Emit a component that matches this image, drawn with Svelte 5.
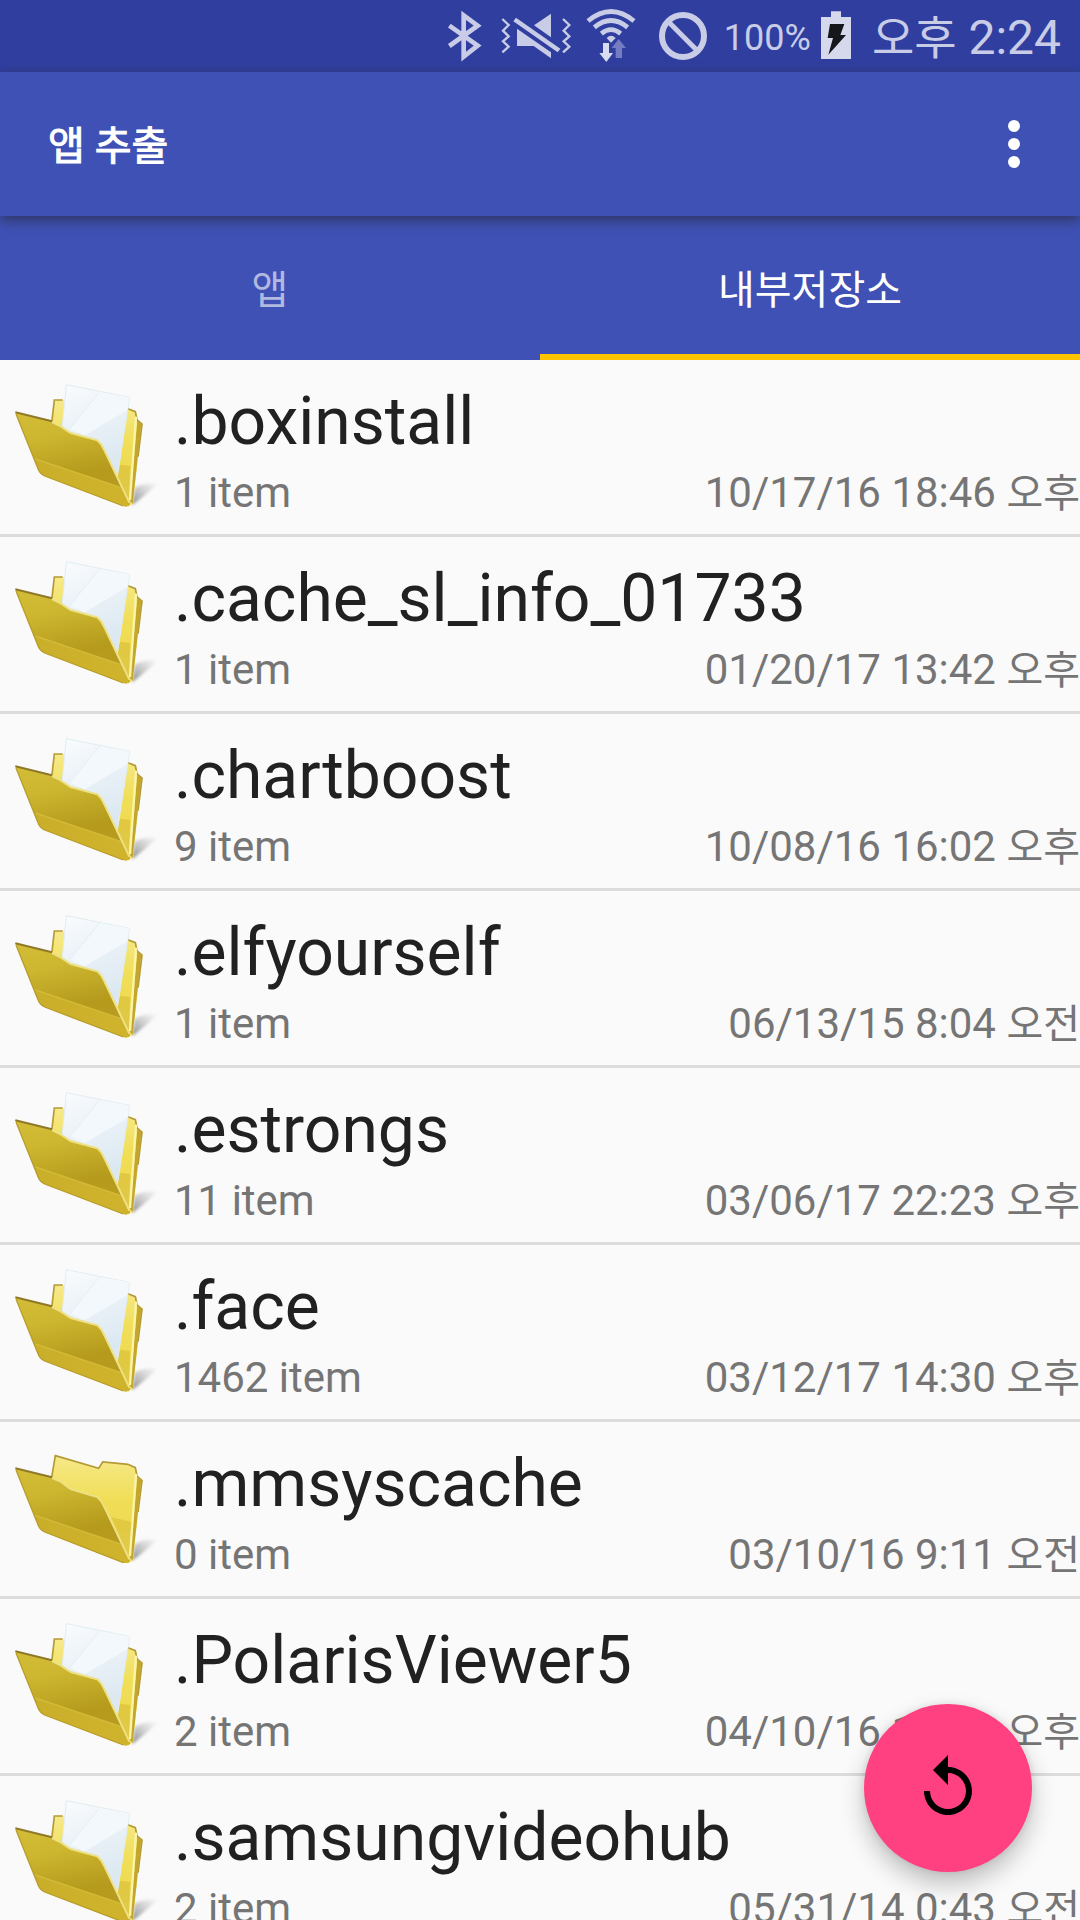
<script>
  const folders = [
    { name: '.boxinstall', count: 1, date: '10/17/16 18:46', half: '오후' },
    { name: '.cache_sl_info_01733', count: 1, date: '01/20/17 13:42', half: '오후' },
    { name: '.chartboost', count: 9, date: '10/08/16 16:02', half: '오후' },
    { name: '.elfyourself', count: 1, date: '06/13/15 8:04', half: '오전' },
    { name: '.estrongs', count: 11, date: '03/06/17 22:23', half: '오후' },
    { name: '.face', count: 1462, date: '03/12/17 14:30', half: '오후' },
    { name: '.mmsyscache', count: 0, date: '03/10/16 9:11', half: '오전' },
    { name: '.PolarisViewer5', count: 2, date: '04/10/16 18:20', half: '오후' },
    { name: '.samsungvideohub', count: 2, date: '05/31/14 0:43', half: '오전' }
  ];
  const tabs = ['앱', '내부저장소'];
  let active = $state(1);
</script>

<svg class="defs" aria-hidden="true">
  <defs>
    <linearGradient id="front" x1="0" y1="0" x2="0.25" y2="1">
      <stop offset="0" stop-color="#d3bd38" />
      <stop offset="0.3" stop-color="#cdb730" />
      <stop offset="0.75" stop-color="#b59a1c" />
      <stop offset="1" stop-color="#b79c20" />
    </linearGradient>
    <linearGradient id="rim" x1="0" y1="0" x2="1" y2="0.4">
      <stop offset="0" stop-color="#c9ae2a" />
      <stop offset="1" stop-color="#d0b32c" />
    </linearGradient>
    <linearGradient id="back" x1="0" y1="0" x2="0" y2="1">
      <stop offset="0" stop-color="#f6e98a" />
      <stop offset="0.4" stop-color="#f1de58" />
      <stop offset="0.65" stop-color="#efdb52" />
      <stop offset="1" stop-color="#f3e57c" />
    </linearGradient>
    <linearGradient id="paper" x1="0" y1="0" x2="0.3" y2="1">
      <stop offset="0" stop-color="#fafcfe" />
      <stop offset="0.5" stop-color="#eaf1f7" />
      <stop offset="1" stop-color="#dbe8f1" />
    </linearGradient>
    <linearGradient id="shade" x1="0" y1="1" x2="1" y2="0">
      <stop offset="0" stop-color="#777" stop-opacity="0.9" />
      <stop offset="0.9" stop-color="#bbb" stop-opacity="0.2" />
    </linearGradient>
    <filter id="soft" x="-20%" y="-20%" width="140%" height="140%">
      <feGaussianBlur stdDeviation="4" />
    </filter>
  </defs>
</svg>

<div class="screen">
  <div class="status">
    <svg class="bt" viewBox="51 0 111 216" aria-label="Bluetooth">
      <path d="M58 77L143 137L101 170V46L143 77L58 138" fill="none" stroke="#c9cce6" stroke-width="14" />
    </svg>
    <svg class="mute" viewBox="198 0 234 216" aria-label="Vibrate">
      <g fill="none" stroke="#c9cce6" stroke-width="7">
        <path d="M217 57L236 75L219 92L236 109L219 124L236 140L217 157" />
        <path d="M399 57L418 75L401 92L418 109L401 124L418 140L399 157" />
      </g>
      <path d="M363 41V112L312 76ZM261 86L363 157V175L311 138H261ZM258 53L391 146L383 157L250 64Z" fill="#c9cce6" />
    </svg>
    <svg class="wifi" viewBox="468 0 168 216" aria-label="Wi-Fi">
      <g fill="none" stroke="#c9cce6" stroke-width="14">
        <path d="M474 63Q543 6 612 63" />
        <path d="M493 82Q543 41 593 82" />
        <path d="M514 101Q543 77 572 101" />
      </g>
      <path d="M530 114Q543 101 557 114L543 128Z" fill="#c9cce6" />
      <path d="M519 129H537V159H549L529 186L508 159H519Z" fill="#d9dbef" />
      <path d="M566 117L588 144H576V174H557V144H545Z" fill="#747cc2" />
    </svg>
    <svg class="block" viewBox="672 0 174 216" aria-label="Blocked">
      <g fill="none" stroke="#c9cce6">
        <circle cx="759" cy="108" r="63" stroke-width="18" />
        <path d="M716 66L802 152" stroke-width="15" />
      </g>
    </svg>
    <span class="percent">100%</span>
    <svg class="battery" viewBox="213 0 90 216" aria-label="Charging">
      <path d="M243 34H273V51H303V177H213V51H243Z" fill="#d6d8eb" />
      <path d="M240 72H283L271 105H288L235 164L249 114H233Z" fill="#16171a" />
    </svg>
    <time class="clock"><span class="half">오후</span> 2:24</time>
  </div>

  <header class="appbar">
    <h1>앱 추출</h1>
    <button class="more" aria-label="More options">
      <svg viewBox="0 0 12 48">
        <circle cx="6" cy="6" r="6" />
        <circle cx="6" cy="24" r="6" />
        <circle cx="6" cy="42" r="6" />
      </svg>
    </button>
  </header>

  <div class="tabs" role="tablist">
    {#each tabs as tab, i}
      <button role="tab" class="tab" class:active={active === i} aria-selected={active === i} onclick={() => (active = i)}>{tab}</button>
    {/each}
  </div>

  <ul class="list">
    {#each folders as f}
      <li>
        <button class="row">
          <svg class="folder" viewBox="36 0 450 522" aria-hidden="true">
            {#if f.count > 0}
              <path d="M396 436L404 384Q430 366 470 372Q446 398 396 436Z" fill="url(#shade)" filter="url(#soft)" />
              <path d="M155 190L163 120L188 120L250 150L384 146L408 156L411 180L426 190L398 432L384 440Z" fill="url(#back)" />
              <path d="M155 190L163 120L188 120M384 146L406 155L411 180L426 192L414 290" fill="none" stroke="#b59a35" stroke-width="5" />
              <path d="M362 314L390 318L388 424L348 340Z" fill="#dcc33c" opacity="0.8" />
              <path d="M412 182L424 192L398 432L390 424Z" fill="#c3a62c" />
              <path d="M408 170L390 420" stroke="#faf3a8" stroke-width="7" fill="none" />
              <path d="M199 74L389 112L352 350L186 208Z" fill="url(#paper)" stroke="#e0edf2" stroke-width="3" />
              <path d="M298 96L210 206L254 226L382 150L388 112Z" fill="#f3f8fc" />
              <path d="M298 96L210 206" stroke="#e6eff5" stroke-width="3" />
              <path d="M46 156L156 184L180 198L212 218L292 240Q304 250 312 268L390 432Q386 442 370 438L134 348Q118 340 114 326Z" fill="url(#front)" />
              <path d="M106 297L362 382L390 432Q386 442 370 438L134 348Q118 340 114 326Z" fill="url(#rim)" />
              <path d="M106 297L362 382" stroke="#d9c13e" stroke-width="4" opacity="0.7" />
              <path d="M46 157L156 184" stroke="#8f7926" stroke-width="6" />
              <path d="M156 186L182 199L212 219L292 241Q304 251 312 269L388 428" fill="none" stroke="#eee184" stroke-width="6" />
              <path d="M48 162L114 326Q118 340 134 348L370 438" fill="none" stroke="#b99d2b" stroke-width="4" />
            {:else}
              <path d="M396 416L404 368Q430 348 470 354Q446 380 396 416Z" fill="url(#shade)" filter="url(#soft)" />
              <path d="M155 170L166 100L296 138L308 120L384 126L408 138L411 162L426 174L398 416L384 424Z" fill="url(#back)" />
              <path d="M155 166L166 101L296 139L308 120L384 127L406 137L411 162L426 176L414 270" fill="none" stroke="#b59a35" stroke-width="5" />
              <path d="M334 286L396 300L388 410Z" fill="#dcc33c" opacity="0.75" />
              <path d="M412 164L424 174L398 416L390 408Z" fill="#c3a62c" />
              <path d="M408 156L390 402" stroke="#faf3a8" stroke-width="7" fill="none" />
              <path d="M46 138L156 166L180 178L212 200L292 224Q304 234 312 252L390 416Q386 426 370 422L134 330Q118 322 114 308Z" fill="url(#front)" />
              <path d="M106 280L362 366L390 416Q386 426 370 422L134 330Q118 322 114 308Z" fill="url(#rim)" />
              <path d="M106 280L362 366" stroke="#d9c13e" stroke-width="4" opacity="0.7" />
              <path d="M46 139L156 166" stroke="#8f7926" stroke-width="6" />
              <path d="M156 168L182 179L212 201L292 225Q304 235 312 253L388 412" fill="none" stroke="#eee184" stroke-width="6" />
              <path d="M48 144L114 308Q118 322 134 330L370 422" fill="none" stroke="#b99d2b" stroke-width="4" />
            {/if}
          </svg>
          <span class="text">
            <span class="name">{f.name}</span>
            <span class="meta">
              <span>{f.count} item</span>
              <span>{f.date} <span class="half">{f.half}</span></span>
            </span>
          </span>
        </button>
      </li>
    {/each}
  </ul>

  <button class="fab" aria-label="Refresh">
    <svg viewBox="0 0 24 24">
      <path d="M12 5V1L7 6l5 5V7c3.31 0 6 2.69 6 6s-2.69 6-6 6-6-2.69-6-6H4c0 4.42 3.58 8 8 8s8-3.58 8-8-3.58-8-8-8z" />
    </svg>
  </button>
</div>

<style>
  :global(body) {
    background: #fafafa;
  }
  .defs {
    position: absolute;
    width: 0;
    height: 0;
  }
  .screen {
    display: flex;
    flex-direction: column;
    height: 100vh;
    overflow: hidden;
    background: #fafafa;
    font-family: Roboto, 'Noto Sans CJK KR', sans-serif;
  }
  button {
    border: 0;
    padding: 0;
    background: none;
    font: inherit;
    color: inherit;
    cursor: pointer;
  }
  .status {
    flex: none;
    display: flex;
    align-items: center;
    justify-content: flex-end;
    gap: 10px;
    height: 72px;
    padding-right: 19px;
    background: #303f9f;
    color: #c9cce6;
  }
  .status svg {
    flex: none;
    height: 72px;
  }
  .bt {
    width: 37px;
    margin-right: 2px;
  }
  .mute {
    width: 78px;
    margin-right: 2px;
  }
  .wifi {
    width: 56px;
    margin-right: 2px;
  }
  .block {
    width: 58px;
    margin-right: 2px;
  }
  .battery {
    width: 30px;
  }
  .percent {
    padding-top: 4px;
    font-size: 36px;
    line-height: 42px;
  }
  .clock {
    padding: 4px 0 0 11px;
    font-size: 48px;
    line-height: 56px;
    white-space: nowrap;
  }
  .clock .half {
    font-size: 46px;
  }
  .appbar {
    position: relative;
    z-index: 1;
    flex: none;
    display: flex;
    align-items: center;
    justify-content: space-between;
    height: 144px;
    padding: 0 36px 0 48px;
    background: #3f51b5;
    color: #fff;
    box-shadow: 0 4px 12px rgba(40, 40, 60, 0.7);
  }
  h1 {
    margin: 0;
    padding-top: 6px;
    font-size: 40px;
    line-height: 48px;
    font-weight: 400;
    -webkit-text-stroke: 1px currentColor;
  }
  .more {
    display: grid;
    place-items: center;
    width: 60px;
    height: 96px;
  }
  .more svg {
    width: 12px;
    height: 48px;
    fill: #fff;
  }
  .tabs {
    flex: none;
    display: grid;
    grid-template-columns: 1fr 1fr;
    height: 144px;
    background: #3f51b5;
  }
  .tab {
    padding-top: 12px;
    border-bottom: 6px solid transparent;
    color: #b2b9e1;
    font-size: 40px;
    line-height: 48px;
  }
  .tab.active {
    border-bottom-color: #ffc400;
    color: #fff;
  }
  .list {
    flex: 1;
    min-height: 0;
    margin: 0;
    padding: 0;
    overflow-y: auto;
    scrollbar-width: none;
    list-style: none;
  }
  li {
    border-bottom: 3px solid #dcdcdc;
  }
  .row {
    display: flex;
    gap: 12px;
    width: 100%;
    padding-left: 12px;
    text-align: left;
  }
  .folder {
    flex: none;
    width: 150px;
    height: 174px;
  }
  .text {
    flex: 1;
    min-width: 0;
    display: flex;
    flex-direction: column;
    gap: 7px;
    padding-top: 23px;
  }
  .name {
    color: #212121;
    font-size: 66px;
    line-height: 78px;
  }
  .meta {
    display: flex;
    justify-content: space-between;
    color: #757575;
    font-size: 42px;
    line-height: 50px;
    white-space: nowrap;
  }
  .meta .half {
    font-size: 40px;
  }
  .fab {
    position: fixed;
    z-index: 2;
    right: 48px;
    bottom: 48px;
    display: grid;
    place-items: center;
    width: 168px;
    height: 168px;
    border-radius: 50%;
    background: #ff4081;
    box-shadow: 0 12px 24px rgba(0, 0, 0, 0.24), 0 0 8px rgba(0, 0, 0, 0.1);
  }
  .fab svg {
    width: 72px;
    height: 72px;
  }
</style>
